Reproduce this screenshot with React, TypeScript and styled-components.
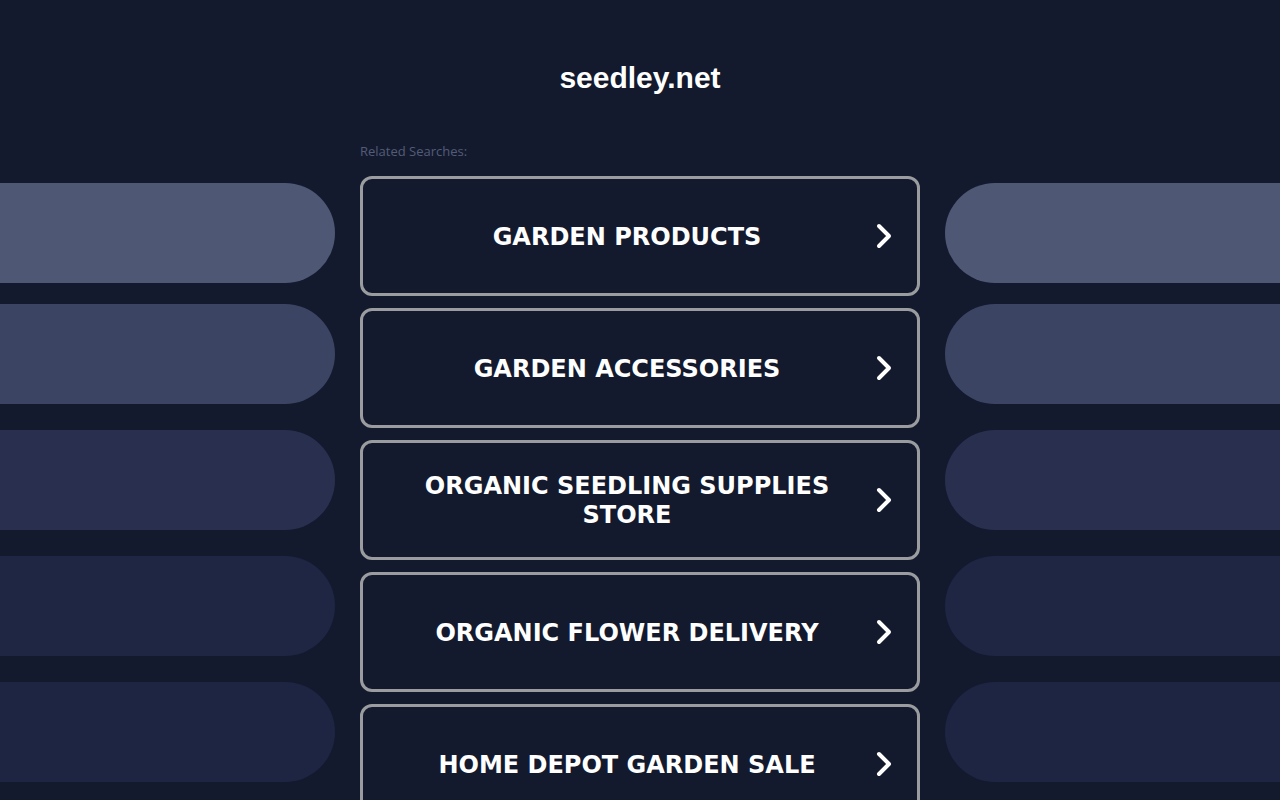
import React from 'react';
import styled, { createGlobalStyle } from 'styled-components';

const GlobalStyle = createGlobalStyle`
  html, body {
    margin: 0;
    padding: 0;
    background: #131a2e;
  }
  body {
    font-family: "Liberation Sans", Arial, sans-serif;
    overflow: hidden;
  }
`;

const searches = [
  'GARDEN PRODUCTS',
  'GARDEN ACCESSORIES',
  'ORGANIC SEEDLING SUPPLIES STORE',
  'ORGANIC FLOWER DELIVERY',
  'HOME DEPOT GARDEN SALE',
];

const pillColors = ['#4e5874', '#3b4462', '#29304f', '#1e2644', '#1d2543'];

const Page = styled.div`
  width: 1280px;
  height: 800px;
  overflow: hidden;
  background: #131a2e;
`;

const Header = styled.header`
  padding-top: 62px;
  height: 83px;
  box-sizing: border-box;
  text-align: center;
`;

const Title = styled.h1`
  margin: 0;
  font-family: "Liberation Sans", Arial, sans-serif;
  font-weight: 700;
  font-size: 30px;
  line-height: 32px;
  color: #ffffff;
`;

const Layout = styled.div`
  display: grid;
  grid-template-columns: 335px 560px 335px;
  column-gap: 25px;
  align-items: start;
`;

const PillColumn = styled.div`
  display: flex;
  flex-direction: column;
  gap: 26px;
  padding-top: 100px;
`;

const Pill = styled.div<{ $side: 'left' | 'right'; $color: string }>`
  height: 100px;
  background: ${(p) => p.$color};
  border-radius: ${(p) => (p.$side === 'left' ? '0 50px 50px 0' : '50px 0 0 50px')};
  &:first-child {
    margin-bottom: -5px;
  }
`;

const Center = styled.div`
  display: flex;
  flex-direction: column;
`;

const Label = styled.div`
  font-family: "Open Sans", "Liberation Sans", sans-serif;
  font-size: 13px;
  line-height: 16px;
  color: #535c77;
  padding-top: 60px;
  height: 93px;
  box-sizing: border-box;
`;

const List = styled.div`
  display: flex;
  flex-direction: column;
  gap: 12px;
`;

const SearchLink = styled.a`
  display: flex;
  align-items: center;
  height: 120px;
  box-sizing: border-box;
  border: 3px solid #9b9c9f;
  border-radius: 12px;
  padding: 0 23px 0 20px;
  text-decoration: none;
  color: #ffffff;
  cursor: pointer;
`;

const LinkText = styled.span`
  flex: 1;
  text-align: center;
  font-family: "DejaVu Sans", Verdana, sans-serif;
  font-weight: 700;
  font-size: 24px;
  line-height: 29px;
  padding: 2px 17px 0 14px;
`;

const Chevron = () => (
  <svg width="20" height="28" viewBox="0 0 20 28" fill="none">
    <polyline
      points="5,4 15,14 5,24"
      stroke="#ffffff"
      strokeWidth="4"
      strokeLinecap="round"
      strokeLinejoin="round"
    />
  </svg>
);

export default function App() {
  return (
    <Page>
      <GlobalStyle />
      <Header>
        <Title>seedley.net</Title>
      </Header>
      <Layout>
        <PillColumn>
          {pillColors.map((c, i) => (
            <Pill key={i} $side="left" $color={c} />
          ))}
        </PillColumn>
        <Center>
          <Label>Related Searches:</Label>
          <List>
            {searches.map((s) => (
              <SearchLink key={s}>
                <LinkText>{s}</LinkText>
                <Chevron />
              </SearchLink>
            ))}
          </List>
        </Center>
        <PillColumn>
          {pillColors.map((c, i) => (
            <Pill key={i} $side="right" $color={c} />
          ))}
        </PillColumn>
      </Layout>
    </Page>
  );
}
